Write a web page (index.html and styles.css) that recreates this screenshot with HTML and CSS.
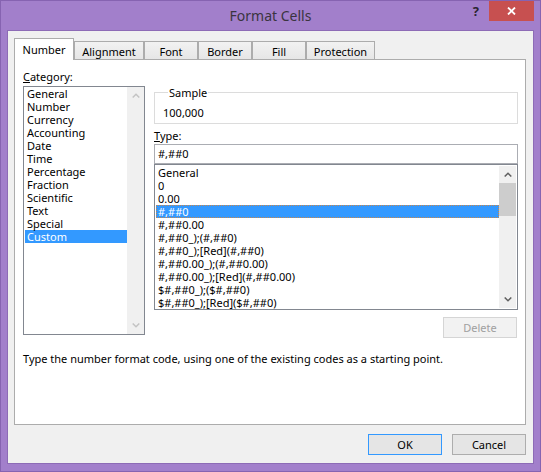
FILE: index.html
```html
<!DOCTYPE html>
<html>
<head>
<meta charset="utf-8">
<title>Format Cells</title>
<link rel="stylesheet" href="styles.css">
</head>
<body>
<div class="window">
  <div class="titlebar">
    <div></div>
    <div class="title">Format Cells</div>
    <div class="controls">
      <span class="help">?</span>
      <div class="close">
        <svg width="9" height="8" viewBox="0 0 9 8"><path d="M1 0.5 L8 7.5 M8 0.5 L1 7.5" stroke="#fff" stroke-width="1.8" fill="none"/></svg>
      </div>
    </div>
  </div>
  <div class="client">
    <div class="tabs">
      <div class="tab active t-number">Number</div>
      <div class="tab t-align">Alignment</div>
      <div class="tab t-font">Font</div>
      <div class="tab t-border">Border</div>
      <div class="tab t-fill">Fill</div>
      <div class="tab t-prot">Protection</div>
    </div>
    <div class="panel">
      <div class="columns">
        <div class="left">
          <div class="label"><u>C</u>ategory:</div>
          <div class="listbox cat">
            <div class="items">
              <div class="item">General</div>
              <div class="item">Number</div>
              <div class="item">Currency</div>
              <div class="item">Accounting</div>
              <div class="item">Date</div>
              <div class="item">Time</div>
              <div class="item">Percentage</div>
              <div class="item">Fraction</div>
              <div class="item">Scientific</div>
              <div class="item">Text</div>
              <div class="item">Special</div>
              <div class="item sel">Custom</div>
            </div>
            <div class="vscroll disabled">
              <div class="sbtn"><svg width="8" height="5" viewBox="0 0 8 5"><path d="M0.7 4.5 L4 1.2 L7.3 4.5" stroke="#c4c4c4" stroke-width="1.5" fill="none"/></svg></div>
              <div class="sbtn"><svg width="8" height="5" viewBox="0 0 8 5"><path d="M0.7 0.5 L4 3.8 L7.3 0.5" stroke="#c4c4c4" stroke-width="1.5" fill="none"/></svg></div>
            </div>
          </div>
        </div>
        <div class="right">
          <fieldset class="sample">
            <legend>Sample</legend>
            <div class="sample-value">100,000</div>
          </fieldset>
          <div class="label type-label"><u>T</u>ype:</div>
          <div class="textbox">#,##0</div>
          <div class="listbox types">
            <div class="items">
              <div class="item">General</div>
              <div class="item">0</div>
              <div class="item">0.00</div>
              <div class="item sel focus">#,##0</div>
              <div class="item">#,##0.00</div>
              <div class="item">#,##0_);(#,##0)</div>
              <div class="item">#,##0_);[Red](#,##0)</div>
              <div class="item">#,##0.00_);(#,##0.00)</div>
              <div class="item">#,##0.00_);[Red](#,##0.00)</div>
              <div class="item">$#,##0_);($#,##0)</div>
              <div class="item">$#,##0_);[Red]($#,##0)</div>
            </div>
            <div class="vscroll">
              <div class="sbtn"><svg width="8" height="5" viewBox="0 0 8 5"><path d="M0.7 4.5 L4 1.2 L7.3 4.5" stroke="#606060" stroke-width="1.5" fill="none"/></svg></div>
              <div class="thumb"></div>
              <div class="track"></div>
              <div class="sbtn"><svg width="8" height="5" viewBox="0 0 8 5"><path d="M0.7 0.5 L4 3.8 L7.3 0.5" stroke="#606060" stroke-width="1.5" fill="none"/></svg></div>
            </div>
          </div>
          <div class="delete-row"><button class="btn disabled">Delete</button></div>
        </div>
      </div>
      <div class="desc">Type the number format code, using one of the existing codes as a starting point.</div>
    </div>
    <div class="buttons">
      <button class="btn default">OK</button>
      <button class="btn">Cancel</button>
    </div>
  </div>
</div>
</body>
</html>
```

FILE: styles.css
```css
* { box-sizing: border-box; }
html, body { margin: 0; padding: 0; }
body {
  font-family: "Noto Sans", "Open Sans", sans-serif;
  font-size: 11px;
  color: #000;
  background: #A27FCB;
}
.window {
  width: 541px;
  height: 472px;
  background: #A27FCB;
  border: 1px solid #8663B1;
  display: flex;
  flex-direction: column;
}
.titlebar {
  height: 29px;
  display: grid;
  grid-template-columns: 1fr auto 1fr;
}
.title {
  font-size: 14px;
  line-height: 29px;
  color: #3a3440;
}
.controls {
  justify-self: end;
  display: flex;
  align-items: flex-start;
}
.help {
  font-weight: bold;
  font-size: 13px;
  line-height: 20px;
  color: #2a2530;
  margin-right: 10px;
}
.close {
  width: 45px;
  height: 20px;
  background: #C75050;
  margin-right: 6px;
  display: flex;
  align-items: center;
  justify-content: center;
}
.client {
  flex: 1;
  margin: 0 6px 7px 6px;
  background: #F0F0F0;
  border: 1px solid #8D6BB6;
  padding: 7px 7px 8px 6px;
  display: flex;
  flex-direction: column;
}
.tabs {
  display: flex;
  height: 21px;
  align-items: flex-end;
}
.tab {
  height: 18px;
  border: 1px solid #ACACAC;
  border-bottom: none;
  background: linear-gradient(#F2F2F2, #E6E6E6);
  display: flex;
  align-items: center;
  justify-content: center;
  padding-top: 1px;
}
.tab.active {
  height: 22px;
  margin-bottom: -1px;
  background: #fff;
  position: relative;
  z-index: 1;
  padding-top: 0;
}
.t-number { width: 60px; }
.t-align { width: 70px; }
.t-font { width: 54px; }
.t-border { width: 54px; }
.t-fill { width: 54px; }
.t-prot { width: 69px; }
.panel {
  height: 366px;
  border: 1px solid #ACACAC;
  background: #fff;
  padding: 10px 7px 0 8px;
}
.columns {
  display: grid;
  grid-template-columns: 122px 1fr;
  column-gap: 9px;
}
.label {
  line-height: 13px;
  height: 13px;
  margin-bottom: 3px;
  white-space: nowrap;
}
.listbox {
  border: 1px solid #828790;
  display: flex;
  background: #fff;
}
.cat { height: 249px; }
.cat .items { flex: 1; padding-left: 1px; }
.item {
  height: 13px;
  line-height: 13px;
  padding-left: 2px;
  white-space: nowrap;
}
.item.sel {
  background: #3399FF;
  color: #fff;
}
.item.focus {
  outline: 1px dotted #C8864A;
  outline-offset: -1px;
}
.vscroll {
  width: 17px;
  background: #F0F0F0;
  display: flex;
  flex-direction: column;
  justify-content: space-between;
}
.sbtn {
  height: 17px;
  display: flex;
  align-items: center;
  justify-content: center;
}
.thumb {
  height: 33px;
  background: #CDCDCD;
}
.track { flex: 1; }
.right { padding-top: 16px; }
.sample {
  margin: 0;
  border: 1px solid #DCDCDC;
  padding: 7px 0 4px 8px;
  min-width: 0;
}
.sample legend {
  padding: 0 1px;
  margin-left: 5px;
  line-height: 13px;
}
.sample-value { line-height: 13px; }
.type-label { margin-top: 5px; margin-bottom: 2px; }
.textbox {
  height: 20px;
  border: 1px solid #ABADB3;
  padding-left: 3px;
  line-height: 18px;
}
.types {
  height: 146px;
  padding: 1px;
}
.types .items { flex: 1; }
.delete-row {
  display: flex;
  justify-content: flex-end;
  margin-top: 7px;
  padding-right: 1px;
}
.desc {
  margin-top: 14px;
  line-height: 13px;
}
.buttons {
  display: flex;
  justify-content: flex-end;
  gap: 10px;
  margin-top: 9px;
}
.btn {
  width: 74px;
  height: 21px;
  border: 1px solid #ADADAD;
  background: #E5E5E5;
  font: inherit;
  color: #000;
  padding: 0;
  margin: 0;
}
.btn.default { border-color: #3399FF; }
.btn.disabled {
  background: #F2F2F2;
  border-color: #D5D5D5;
  color: #A0A0A0;
}
```
